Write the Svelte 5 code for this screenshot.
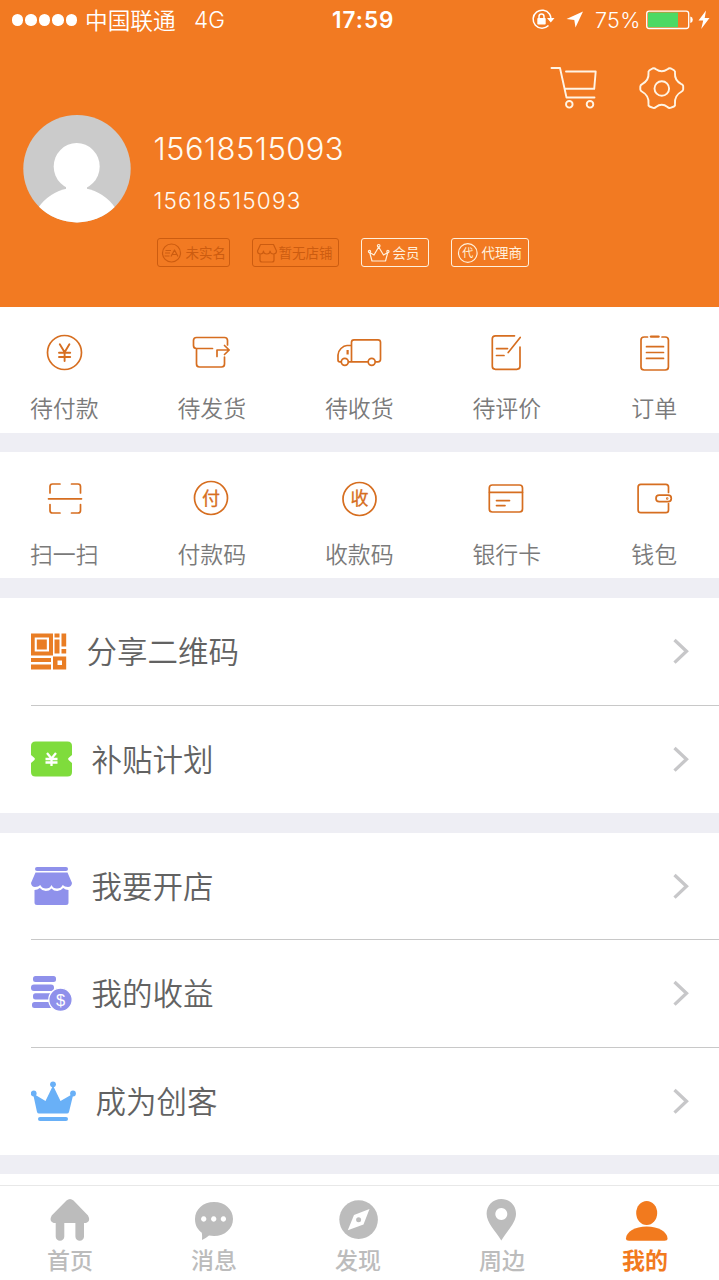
<script>
  const orderItems = [
    { label: '待付款', box: '40 328 50 50', art: '<circle cx="64.5" cy="352.5" r="17"/><path d="M59.8 344.3l4.8 8 4.8-8M64.6 352v9M59 352.8h11.2M59 357h11.2" stroke-width="1.9"/>' },
    { label: '待发货', box: '187.500 328 50 50', art: '<path d="M228 345v-4.5q0-3-3-3h-28q-3 0-3 3v5q0 3 3 3h16M197 348.500v15.500q0 3 3 3h22q3 0 3-3v-7M217.500 356.500v-6.500h11M225 345.500l4.700 4.500-4.700 4.500"/>' },
    { label: '待收货', box: '335 328 50 50', art: '<path d="M341 361.800h-1.200q-1.800 0-1.800-1.800v-5q0-3.500 3-6.500t6-3h4M348.500 361.800h19M375.500 361.800h2.500q2.500 0 2.500-2.500v-17q0-2.500-2.500-2.500h-24q-2.500 0-2.500 2.500v19.500"/><circle cx="344.800" cy="361.800" r="3.500"/><circle cx="371.700" cy="361.800" r="3.500"/><path d="M348.700 350h-2.200v4.500h2.200z" fill="#d66e20" stroke="none"/>' },
    { label: '待评价', box: '482.500 328 50 50', art: '<path d="M515 335.800h-19q-3.200 0-3.200 3v27.500q0 3 3.200 3h21.300q3.200 0 3.200-3V347M520.700 337.500l-12 15M497 348.600h11M497 355.500h7.500"/>' },
    { label: '订单', box: '630 328 50 50', art: '<path d="M647.500 337h-3.300q-3.200 0-3.200 3v27q0 3 3.200 3h21q3.200 0 3.200-3v-27q0-3-3.200-3H662M646.500 346.700h17M646.500 352.500h17M646.500 358.400h17"/><path d="M651 336.600h7.500" stroke-width="2.400"/>' }
  ];
  const payItems = [
    { label: '扫一扫', box: '40 474 50 50', art: '<path d="M50 493v-6.500q0-2.500 2.500-2.500H60M71.500 484H78q2.500 0 2.500 2.500v6.500M50 504.500v6q0 2.500 2.500 2.500H60M71.500 513H78q2.500 0 2.500-2.500v-6M48.500 498.800h33"/>' },
    { label: '付款码', box: '187.500 474 50 50', art: '<circle cx="211.500" cy="498" r="16.500"/><text x="211.500" y="504.500" text-anchor="middle" font-size="18" font-weight="400" fill="#d66e20" stroke="#d66e20" stroke-width=".3">付</text>' },
    { label: '收款码', box: '335 474 50 50', art: '<circle cx="359.500" cy="499" r="16.500"/><text x="359.500" y="505.300" text-anchor="middle" font-size="18" font-weight="400" fill="#d66e20" stroke="#d66e20" stroke-width=".3">收</text>' },
    { label: '银行卡', box: '482.500 474 50 50', art: '<rect x="489.800" y="485" width="33.200" height="27" rx="3"/><path d="M490 492.300h33M497 500.600h13M497 505.600h8.500"/>' },
    { label: '钱包', box: '630 474 50 50', art: '<path d="M668.500 492.500V487q0-2.700-2.700-2.700h-25q-2.700 0-2.700 2.700v23q0 2.700 2.700 2.700h25q2.700 0 2.700-2.700v-6.500"/><rect x="656" y="495.200" width="15.300" height="6.500" rx="3.200"/><circle cx="667.200" cy="498.400" r=".4"/>' }
  ];
  const menuGroups = [
    [
      { label: '分享二维码', w: 36.5, box: '31 631.500 36.5 40', art: '<g fill="#e97d24"><path fill-rule="evenodd" d="M31 634h22v22H31zM34.700 638v14h14.300v-14z"/><rect x="36.800" y="640" width="10" height="10"/><path d="M54.500 634h5v4h-5zM54.500 640h5v14h-5zM61.500 634h4.700v13h-4.700zM61.500 649.500h4.700v4.500h-4.700zM31 658.500h20v4H31zM31 665h20v5H31z"/><path fill-rule="evenodd" d="M53 657h13.200v13H53zM57.500 661v4.500h4.500V661z"/></g>' },
      { label: '补贴计划', w: 41.5, box: '31 739.500 41.500 40', art: '<path fill="#7fdc3c" d="M35.500 742h32q4.500 0 4.500 4.500v9l-3.200 2.800q-1.300 1.200 0 2.400l3.200 2.800v9q0 4.500-4.500 4.500h-32q-4.500 0-4.500-4.500v-9l3.200-2.800q1.300-1.200 0-2.400l-3.200-2.800v-9q0-4.500 4.500-4.500z"/><path d="M47 753.500l4.500 5.500 4.500-5.500M51.500 758.500v8M45.500 759.500h12M45.500 763h12" stroke="#fff" stroke-width="2.300" fill="none"/>' }
    ],
    [
      { label: '我要开店', w: 41.5, box: '31 866 41.500 40', art: '<g fill="#8f91eb"><rect x="35" y="867" width="33" height="4" rx="2"/><path d="M35.500 872.500h32L72 883q-.5 4-4 4t-5.300-2q-1.700 3.500-5.700 3.500t-5.500-3.500q-1.500 3.500-5.500 3.500t-5.700-3.500q-1.800 2-5.300 2t-4-4z"/><path d="M34.500 890q3 0 5.300-2 2.500 3 6 3t5.700-2.500q2.200 2.500 5.700 2.500t6-3q2.300 2 5.300 2v12.500q0 2.500-2.500 2.500H37q-2.500 0-2.500-2.500z"/></g>' },
      { label: '我的收益', w: 41.5, box: '31 973 41.500 40', art: '<g fill="#8f91eb"><rect x="33" y="976" width="23" height="6" rx="2.500"/><rect x="31" y="984.500" width="23" height="6.500" rx="3"/><rect x="33" y="993.300" width="22" height="6.200" rx="2.500"/><rect x="32" y="1002" width="22" height="6" rx="2.500"/><circle cx="60.500" cy="999.800" r="11.700" stroke="#fff" stroke-width="1.300"/></g><text x="60.500" y="1005.700" text-anchor="middle" font-size="16.500" fill="#fff" font-weight="400" font-family="Liberation Sans, sans-serif">$</text>' },
      { label: '成为创客', w: 45.5, box: '31 1081 45.500 40', art: '<g fill="#69b0f7"><circle cx="53" cy="1084.300" r="2.900"/><circle cx="33.700" cy="1093.500" r="2.900"/><circle cx="73" cy="1093.500" r="2.900"/><path d="M33 1093.500l12.500 7.500 7.500-15.500 7.500 15.500 13-7.500-4.500 18.500q-.5 1.500-2 1.500H39q-1.500 0-2-1.500z"/><rect x="38" y="1117" width="30" height="4" rx="2"/></g>' }
    ]
  ];
  const tabs = [
    { label: '首页', box: '47 1198 46 46', art: '<path d="M66.500 1200.500q3.500-3 7 0l14.500 15q3 6-2 7.500h-2v13.500a4.300 4.300 0 0 1-8.600 0V1223H64.300v13.500a4.300 4.300 0 0 1-8.600 0V1223h-2q-5-1.500-2-7.500z"/>' },
    { label: '消息', box: '191 1198 46 46', art: '<path fill-rule="evenodd" d="M214 1202c11 0 19 7.500 19 17s-8 17-19 17q-2.500 0-5-.4-4 3.500-7 4.400 .3-5-.2-7.300C197.500 1229.500 195 1225 195 1219c0-9.500 8-17 19-17zM203.700 1216.300a2.700 2.700 0 1 0 .01 0zM213.700 1216.300a2.700 2.700 0 1 0 .01 0zM223.400 1216.300a2.700 2.700 0 1 0 .01 0z"/>' },
    { label: '发现', box: '335 1198 46 46', art: '<circle cx="358.600" cy="1219.600" r="19.300"/><path fill="#fff" d="M369.500 1209l-6 15.500-15.700 5.800 6.200-15.300z"/><circle cx="358.600" cy="1219.700" r="2.500"/>' },
    { label: '周边', box: '479 1198 46 46', art: '<path fill-rule="evenodd" d="M501.300 1199c8.500 0 14.700 6.500 14.700 14.700 0 9-8.500 16.500-14.700 26.800-6.200-10.300-14.700-17.800-14.700-26.800 0-8.200 6.200-14.700 14.700-14.700zM501.300 1208a6 6 0 1 0 .01 0z"/>' },
    { label: '我的', active: true, box: '623 1198 46 46', art: '<ellipse cx="646.700" cy="1213" rx="10.500" ry="12"/><path d="M626 1238.500c0-6.500 9-12 20.700-12s20.800 5.500 20.800 12q0 2.200-3 2.200h-35.500q-3 0-3-2.200z"/>' }
  ];
  const badges = [
    { label: '未实名', cls: 'verify off', box: '161 241 22 22', art: '<circle cx="171.500" cy="252" r="9"/><path d="M165.500 249.500h5.500M165 252h5M164.500 255h5M171 255.500l3.500-6.500 3.500 6.500M172.500 253.500h4"/>' },
    { label: '暂无店铺', cls: 'shop off', box: '256 241 22 22', art: '<path d="M260.500 243.500h13l3 6.500q0 3-3 3t-3.500-3q0 3-3.200 3t-3.300-3q0 3-3 3t-3-3zM260 253V259q0 2 2 2h10q2 0 2-2v-6"/>' },
    { label: '会员', cls: 'member', box: '367 241 24 22', art: '<path d="M372 260h13.500l2.300-8.500-4.300 2.500-4.800-8-4.700 8-4.300-2.500z"/><circle cx="378.700" cy="244.800" r="1.300"/><circle cx="369.500" cy="250.500" r="1.100"/><circle cx="387.900" cy="250.500" r="1.100"/>' },
    { label: '代理商', cls: 'agent', box: '457 241 22 22', art: '<circle cx="467.800" cy="252" r="9.300"/><text x="467.800" y="256" text-anchor="middle" font-size="11" fill="currentColor" stroke="none">代</text>' }
  ];
</script>

{#snippet features(items)}
  <section class="features">
    {#each items as item}
      <div class="feature">
        <svg viewBox={item.box} width="50" height="50" fill="none" stroke="#d66e20" stroke-width="1.7" stroke-linecap="round" stroke-linejoin="round">{@html item.art}</svg>
        <span>{item.label}</span>
      </div>
    {/each}
  </section>
{/snippet}

<div class="screen">
  <header>
    <div class="status">
      <div class="left">
        <div class="dots">{#each Array(5) as _}<i></i>{/each}</div>
        <span class="carrier">中国联通</span>
        <span class="net">4G</span>
      </div>
      <b>17:59</b>
      <div class="right">
        <svg width="56" height="40" viewBox="530 0 56 40" fill="none" stroke="#fff" stroke-width="1.5">
          <path d="M549.500 14a9 9 0 1 0-1 11.500M549.500 14q1.200 2 1.300 4" />
          <path d="M547 18h7.500l-3.700 4.500z" fill="#fff" stroke="none" />
          <rect x="537.300" y="18" width="8.400" height="6.500" rx=".8" fill="#fff" stroke="none" />
          <path d="M539 18v-1.500a2.500 2.500 0 0 1 5 0V18" />
          <path d="M583 11.500l-7.500 16-1.200-7.500-7.800-1z" fill="#fff" stroke="none" />
        </svg>
        <span>75%</span>
        <svg width="65" height="40" viewBox="645 0 65 40">
          <rect x="646.700" y="11.200" width="42" height="17.300" rx="2.500" fill="none" stroke="#fff" stroke-width="1.300" />
          <rect x="648" y="12.500" width="30" height="14.700" fill="#4cd964" />
          <path d="M690.300 16.500q2.500.5 2.500 3.300t-2.500 3.300z" fill="#fff" />
          <path d="M706 10.500l-7.500 10h4.700l-2 8.500 8.300-11h-4.800z" fill="#fff" />
        </svg>
      </div>
    </div>
    <div class="actions">
      <svg width="48" height="46" viewBox="550 65 48 46" fill="none" stroke="#fff4e4" stroke-width="1.900" stroke-linecap="round" stroke-linejoin="round">
        <path d="M551.500 68h8.500l6.500 29.500h28M566 71.500h29.700l-1.500 17.300h-29" />
        <circle cx="569.300" cy="104.300" r="3.300" /><circle cx="590" cy="104.300" r="3.300" />
      </svg>
      <svg width="48" height="46" viewBox="638 65 48 46" fill="none" stroke="#fff4e4" stroke-width="1.900" stroke-linejoin="round">
        <path d="M652.500 68.500q2-.7 3.500.8 5.700 4 11.500 0 1.500-1.500 3.500-.8l3 1.800q1.500 1 1 3-.5 7 6 10.500 2.500 1.200 2.200 2.700v3q0 1.300-2.200 2.500-6.500 3.500-6 11.500.5 2-1 3l-3 1.200q-2 .8-3.500-.7-5.800-4.500-11.500 0-1.500 1.500-3.500.7l-3-1.200q-1.500-1-1-3 .5-8-6-11.500-2.200-1.200-2.200-2.500v-3q0-1.500 2.200-2.700 6.500-3.500 6-10.500-.5-2 1-3z" />
        <circle cx="661.800" cy="88.500" r="7.300" />
      </svg>
    </div>
    <div class="profile">
      <svg class="avatar" width="108" height="108" viewBox="0 0 108 108">
        <defs><clipPath id="disc"><circle cx="54" cy="53.700" r="53.700" /></clipPath></defs>
        <g clip-path="url(#disc)"><rect width="108" height="108" fill="#cbcbcb" /><ellipse cx="53.700" cy="51.500" rx="23" ry="23.500" fill="#fff" /><path d="M43 66h21v12H43z" fill="#fff" /><circle cx="53.700" cy="119" r="46.500" fill="#fff" /></g>
      </svg>
      <div class="who">
        <div class="name">15618515093</div>
        <div class="phone">15618515093</div>
        <div class="badges">
          {#each badges as badge}
            <div class="badge {badge.cls}">
              <svg viewBox={badge.box} width={badge.cls === 'member' ? 24 : 22} height="22" fill="none" stroke="currentColor" stroke-width="1.200" stroke-linejoin="round">{@html badge.art}</svg>
              <span>{badge.label}</span>
            </div>
          {/each}
        </div>
      </div>
    </div>
  </header>

  {@render features(orderItems)}
  <div class="gap first"></div>
  {@render features(payItems)}
  <div class="gap"></div>
  {#each menuGroups as group}
    <section class="menu">
      {#each group as row}
        <div class="row">
          <svg viewBox={row.box} width={row.w} height="40">{@html row.art}</svg>
          <span>{row.label}</span>
          <svg class="chevron" width="18" height="28" viewBox="0 0 18 28"><path d="M2.500 3L14.500 14.300 2.500 25.600" fill="none" stroke="#c7c7c9" stroke-width="3.300" /></svg>
        </div>
      {/each}
    </section>
    <div class="gap"></div>
  {/each}

  <nav>
    {#each tabs as tab}
      <div class="tab" class:active={tab.active}>
        <svg viewBox={tab.box} width="46" height="46" fill="currentColor">{@html tab.art}</svg>
        <span>{tab.label}</span>
      </div>
    {/each}
  </nav>
</div>

<style>
  :global(body) { margin: 0; background: #fff; }
  .screen { width: 719px; height: 1280px; display: flex; flex-direction: column; overflow: hidden; background: #fff; font-family: Inter, "Noto Sans CJK SC", sans-serif; font-weight: 350; }
  svg { display: block; flex: none; }
  span { white-space: nowrap; }
  header { height: 307px; flex: none; background: #f27a22; color: #fff; }
  .status { height: 40px; display: grid; grid-template-columns: 332px 1fr 189px; font-size: 22.5px; line-height: 40px; }
  .status b { font-weight: 600; font-size: 22.5px; letter-spacing: 1px; }
  .left, .right { display: flex; align-items: center; }
  .left { padding-left: 12px; }
  .right span { width: 50px; margin-left: 9px; font-size: 21.5px; letter-spacing: .3px; }
  .dots { display: flex; gap: 2.300px; width: 73px; }
  .dots i { width: 11.200px; height: 11.200px; border-radius: 50%; background: #fff; }
  .carrier { width: 109px; font-size: 22.700px; font-family: "Noto Sans CJK SC", sans-serif; }
  .actions { display: flex; justify-content: flex-end; gap: 40px; padding: 25px 33px 4px 0; }
  .profile { display: flex; padding-left: 22.500px; }
  .who { padding-left: 23px; }
  .name { margin-top: 14px; height: 40px; line-height: 40px; font-size: 31px; letter-spacing: .42px; color: #fffaf2; }
  .phone { margin-top: 17px; height: 30px; line-height: 30px; font-size: 22.500px; letter-spacing: 1.180px; color: #fffaf2; }
  .badges { display: flex; margin: 22px 0 0 3px; }
  .badge { box-sizing: border-box; height: 29px; border: 1.500px solid currentColor; border-radius: 3px; display: flex; align-items: center; font: 400 13.500px "Noto Sans CJK SC", sans-serif; color: #fff0dc; }
  .badge svg { margin-left: 3px; }
  .badge span { padding-bottom: 1.500px; }
  .off { color: #cc5c10; }
  .verify { width: 73px; margin-right: 22px; }
  .verify span { margin-left: 3px; }
  .shop { width: 87px; margin-right: 22px; }
  .shop span { margin-left: 1px; }
  .member { width: 68px; margin-right: 22px; }
  .member svg { margin-left: 5px; }
  .member span { margin-left: 2px; }
  .agent { width: 78px; }
  .agent svg { margin-left: 5px; }
  .agent span { margin-left: 3px; }
  .features { height: 126px; flex: none; display: grid; grid-template-columns: repeat(5, 147.500px); margin-left: -9px; }
  .feature { display: flex; flex-direction: column; align-items: center; padding-top: 21px; font-family: "Noto Sans CJK SC", sans-serif; }
  .feature span { margin: 13px 1px 0 0; font-size: 22.900px; line-height: 32px; color: #7a7a7a; }
  .gap { height: 20px; flex: none; background: #eeeef4; }
  .gap.first, .gap:nth-last-child(2) { height: 19px; }
  .features + .gap.first + .features .feature { padding-top: 22px; }
  .menu { flex: none; background: #fff; }
  .row { box-sizing: border-box; height: 107.500px; display: flex; align-items: center; margin-left: 31px; border-bottom: 1px solid #c8c8c8; font-family: "Noto Sans CJK SC", sans-serif; color: #626262; }
  .menu:nth-last-child(3) .row { height: 107.330px; }
  .row:last-child { border-bottom-color: transparent; }
  .row span { margin-left: 19px; padding-bottom: 2px; font-size: 30.500px; line-height: 44px; }
  .chevron { margin: 0 29px 0 auto; }
  nav { flex: none; height: 95px; box-sizing: border-box; margin: auto 0 0 -2px; border-top: 1px solid #e8e8e8; display: grid; grid-template-columns: repeat(5, 144px); }
  .tab { display: flex; flex-direction: column; align-items: center; padding-top: 12px; color: #bcbcbc; font-family: "Noto Sans CJK SC", sans-serif; }
  .tab span { margin-top: -1px; font-size: 23px; line-height: 32px; font-weight: 500; }
  .tab.active { color: #f27a1e; }
  .tab.active span { margin-left: -2px; font-weight: 700; }
</style>
